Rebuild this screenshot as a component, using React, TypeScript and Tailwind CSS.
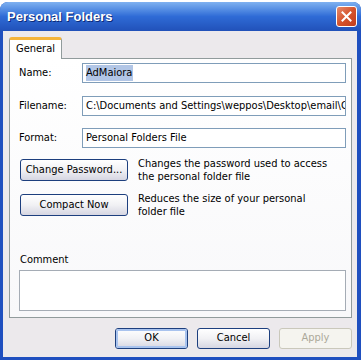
import React from "react";

const font = "font-['Tahoma','DejaVu_Sans_Condensed','Liberation_Sans',sans-serif] text-[11px]";

function XpButton({ label, className = "", primary = false, disabled = false }: { label: string; className?: string; primary?: boolean; disabled?: boolean }) {
  if (disabled) {
    return (
      <div className={`flex items-center justify-center rounded-[3px] border border-[#cac8bb] bg-[#f5f4ef] text-[#aca899] ${className}`}>
        {label}
      </div>
    );
  }
  return (
    <div className={`rounded-[3px] border border-[#1d3f7e] bg-gradient-to-b from-white via-[#f1f1f4] to-[#d6d6e2] ${className}`}>
      <div className={`flex h-full w-full items-center justify-center rounded-[2px] text-black ${primary ? "border-2 border-[#a9c3ee]" : "border border-transparent"}`}>
        {label}
      </div>
    </div>
  );
}

function Field({ label, value, top }: { label: string; value: React.ReactNode; top: string }) {
  return (
    <div className={`flex items-center ${top}`}>
      <div className="w-[72px] pl-[9px]">{label}</div>
      <div className="flex h-[20px] w-[264px] items-center overflow-hidden whitespace-nowrap border border-[#7f9db9] bg-white pl-[3px]">
        {value}
      </div>
    </div>
  );
}

export default function App() {
  return (
    <div className={`relative h-[362px] w-[363px] overflow-hidden bg-white ${font}`}>
      <div className="mt-[2px] flex h-[358px] w-[361px] flex-col rounded-t-[8px] bg-[#1f4fbf]">
        {/* title bar */}
        <div className="flex h-[29px] items-center justify-between rounded-t-[8px] bg-gradient-to-b from-[#7fb1f0] via-[#2f6bd6] to-[#2151b9] pl-[7px] pr-[4px]">
          <span className="font-['Liberation_Sans',sans-serif] text-[13px] font-bold text-white [text-shadow:1px_1px_0_#0c2a78]">
            Personal Folders
          </span>
          <div className="flex h-[21px] w-[21px] items-center justify-center rounded-[3px] border border-white bg-gradient-to-br from-[#e58a6b] via-[#d5532c] to-[#c13d1c]">
            <svg width="11" height="11" viewBox="0 0 11 11">
              <path d="M1.5 1.5 L9.5 9.5 M9.5 1.5 L1.5 9.5" stroke="white" strokeWidth="2" strokeLinecap="square" />
            </svg>
          </div>
        </div>

        {/* client area */}
        <div className="mb-[3px] ml-[3px] mr-[4px] flex flex-1 flex-col bg-[#ece9ec] pt-[6px]">
          <div className="ml-[6px] mr-[5px] flex flex-col">
            <div className="relative z-10 -mb-px flex h-[22px] w-[53px] items-center justify-center rounded-t-[3px] border-x border-t-[3px] border-x-[#919b9c] border-t-[#f4b43a] bg-white">
              General
            </div>
            <div className="flex h-[260px] flex-col border border-[#919b9c] bg-gradient-to-b from-white to-[#f8f8fa]">
              <Field
                label="Name:"
                top="mt-[4px]"
                value={<span className="bg-[#b2c6e6] pr-[1px] text-black">AdMaiora</span>}
              />
              <Field
                label="Filename:"
                top="mt-[13px]"
                value="C:\Documents and Settings\weppos\Desktop\email\C"
              />
              <Field label="Format:" top="mt-[12px]" value="Personal Folders File" />

              <div className="ml-[10px] mt-[11px] flex items-start">
                <XpButton label="Change Password..." className="h-[22px] w-[108px]" />
                <div className="ml-[10px] mt-[-2px] leading-[13px]">
                  Changes the password used to access
                  <br />
                  the personal folder file
                </div>
              </div>
              <div className="ml-[10px] mt-[11px] flex items-start">
                <XpButton label="Compact Now" className="h-[22px] w-[108px]" />
                <div className="ml-[10px] mt-[-2px] leading-[13px]">
                  Reduces the size of your personal
                  <br />
                  folder file
                </div>
              </div>

              <div className="ml-[10px] mt-auto">Comment</div>
              <div className="mb-[6px] ml-[9px] mt-[2px] h-[41px] w-[327px] border border-[#a5acb5] bg-white" />
            </div>
          </div>

          <div className="mr-[5px] mt-[10px] flex justify-end gap-[9px]">
            <XpButton label="OK" primary className="h-[21px] w-[73px]" />
            <XpButton label="Cancel" className="h-[21px] w-[73px]" />
            <XpButton label="Apply" disabled className="h-[21px] w-[73px]" />
          </div>
        </div>
      </div>
    </div>
  );
}
